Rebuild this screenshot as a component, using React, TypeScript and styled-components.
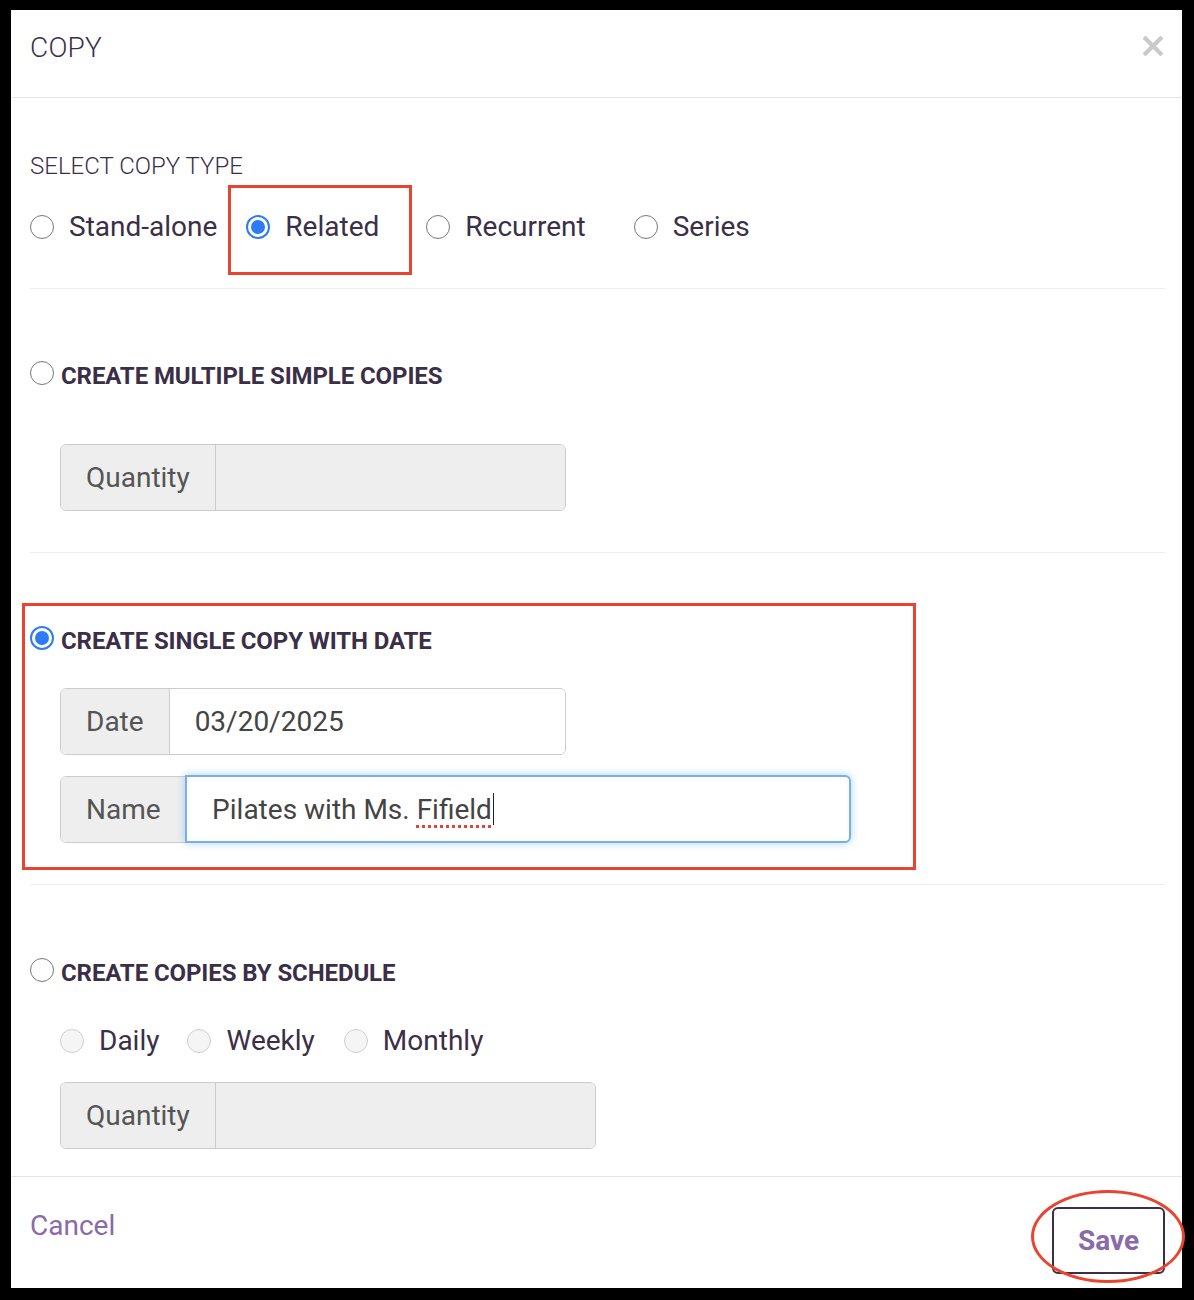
import React from "react";
import styled, { createGlobalStyle } from "styled-components";

const GlobalStyle = createGlobalStyle`
  html, body {
    margin: 0;
    padding: 0;
    background: #000;
  }
  body {
    font-family: Roboto, "Noto Sans", "Liberation Sans", sans-serif;
    color: #3b2f48;
  }
  * {
    box-sizing: border-box;
  }
`;

const red = "#e8442f";
const ink = "#3b2f48";
const purple = "#8a6aa8";

const Frame = styled.div`
  padding: 10px 12px 12px 11px;
  background: #000;
`;

const Modal = styled.div`
  width: 1171px;
  height: 1278px;
  background: #fff;
  display: flex;
  flex-direction: column;
`;

const Header = styled.div`
  height: 89px;
  padding: 0 19px 0 19px;
  border-bottom: 1px solid #e5e5e5;
  display: flex;
  align-items: center;
  justify-content: space-between;
`;

const Title = styled.h4`
  margin: 0 0 12px 0;
  font-size: 28px;
  font-weight: 300;
  letter-spacing: 0.2px;
  color: ${ink};
`;

const CloseButton = styled.button`
  border: 0;
  background: none;
  padding: 0;
  margin: 0 0 14px 0;
  width: 20px;
  height: 20px;
  display: flex;
  cursor: pointer;
`;

const Body = styled.div`
  flex: 1;
  padding: 53px 17px 27px 19px;
  display: flex;
  flex-direction: column;
`;

const Section = styled.div<{ $pad: number; $highlight?: boolean }>`
  position: relative;
  padding-top: ${(p) => p.$pad}px;
  padding-bottom: 41px;
  border-bottom: 1px solid #eee;

  &:last-child {
    border-bottom: 0;
    padding-bottom: 0;
  }

  ${(p) =>
    p.$highlight &&
    `
    &::after {
      content: "";
      position: absolute;
      left: -8px;
      right: 249px;
      top: 50px;
      bottom: 14px;
      border: 3px solid ${red};
      pointer-events: none;
    }
  `}
`;

const TypeLabel = styled.div`
  font-size: 24px;
  font-weight: 300;
  line-height: 30px;
  text-transform: uppercase;
  color: ${ink};
`;

const RadioRow = styled.div<{ $top: number; $indent?: number }>`
  display: flex;
  align-items: center;
  height: 40px;
  margin-top: ${(p) => p.$top}px;
  margin-left: ${(p) => p.$indent ?? 0}px;
`;

const Option = styled.label<{ $after?: number }>`
  position: relative;
  display: flex;
  align-items: center;
  gap: 15px;
  margin-right: ${(p) => p.$after ?? 0}px;
  font-size: 28px;
  line-height: 40px;
  color: ${ink};
  cursor: pointer;
`;

const Marked = styled.span`
  position: relative;
  display: flex;
  align-items: center;
  gap: 15px;

  &::after {
    content: "";
    position: absolute;
    left: -18px;
    right: -33px;
    top: -22px;
    bottom: -28px;
    border: 3px solid ${red};
    pointer-events: none;
  }
`;

const RadioDot = styled.span<{ $checked?: boolean; $disabled?: boolean }>`
  flex: none;
  width: 24px;
  height: 24px;
  border-radius: 50%;
  position: relative;
  background: ${(p) => (p.$disabled ? "#f5f5f5" : "#fff")};
  border: ${(p) =>
    p.$checked
      ? "2px solid #2f7bf5"
      : p.$disabled
      ? "1.5px solid #cfcfcf"
      : "1.5px solid #777"};

  ${(p) =>
    p.$checked &&
    `
    &::after {
      content: "";
      position: absolute;
      inset: 3px;
      border-radius: 50%;
      background: #2f7bf5;
    }
  `}
`;

const Heading = styled.label`
  display: flex;
  align-items: center;
  gap: 7px;
  height: 30px;
  margin-top: 4px;
  font-size: 24px;
  font-weight: 700;
  letter-spacing: -0.1px;
  text-transform: uppercase;
  color: ${ink};
  cursor: pointer;

  ${RadioDot} {
    margin-top: -6px;
  }
`;

const InputGroup = styled.div<{ $width: number; $top: number }>`
  display: flex;
  width: ${(p) => p.$width}px;
  height: 67px;
  margin-top: ${(p) => p.$top}px;
  margin-left: 30px;
  border: 1.5px solid #ccc;
  border-radius: 6px;
  font-size: 28px;
`;

const Addon = styled.span`
  display: flex;
  align-items: center;
  padding: 0 25px 0 25px;
  background: #eee;
  color: #555;
  border-right: 1.5px solid #ccc;
  border-radius: 5px 0 0 5px;
`;

const Field = styled.div<{ $disabled?: boolean; $focus?: boolean }>`
  flex: 1;
  display: flex;
  align-items: center;
  padding-left: 25px;
  color: #444;
  background: ${(p) => (p.$disabled ? "#eee" : "#fff")};
  border-radius: 0 5px 5px 0;

  ${(p) =>
    p.$focus &&
    `
    margin: -1.5px -1.5px -1.5px -1.5px;
    border: 2px solid #7aaee8;
    border-radius: 0 6px 6px 0;
    box-shadow: 0 0 8px rgba(102, 175, 233, 0.55);
  `}
`;

const Misspelled = styled.span`
  text-decoration: underline dotted #e0453a;
  text-decoration-thickness: 3px;
  text-underline-offset: 6px;
`;

const Caret = styled.span`
  display: inline-block;
  width: 1.5px;
  height: 32px;
  background: #222;
  margin-left: 1px;
`;

const Footer = styled.div`
  height: 113px;
  border-top: 1px solid #e5e5e5;
  padding: 30px 17px 0 19px;
  display: flex;
  justify-content: space-between;
  align-items: flex-start;
`;

const CancelLink = styled.a`
  margin-top: 4px;
  font-size: 28px;
  line-height: 30px;
  color: ${purple};
  text-decoration: none;
  cursor: pointer;
`;

const SaveButton = styled.button`
  position: relative;
  width: 113px;
  height: 67px;
  border: 2px solid ${ink};
  border-radius: 6px;
  background: #fff;
  font-family: inherit;
  font-size: 28px;
  font-weight: 700;
  color: ${purple};
  padding: 0;
  cursor: pointer;

  &::after {
    content: "";
    position: absolute;
    left: -23px;
    right: -22px;
    top: -19px;
    bottom: -11px;
    border: 3px solid ${red};
    border-radius: 50%;
    pointer-events: none;
  }
`;

const CloseIcon = () => (
  <svg width="20" height="20" viewBox="0 0 20 20">
    <path d="M2.5 2.5 L17.5 17.5 M17.5 2.5 L2.5 17.5" stroke="#c9c9c9" strokeWidth="4.2" strokeLinecap="square" />
  </svg>
);

export default function App() {
  return (
    <>
      <GlobalStyle />
      <Frame>
        <Modal>
          <Header>
            <Title>COPY</Title>
            <CloseButton aria-label="Close">
              <CloseIcon />
            </CloseButton>
          </Header>

          <Body>
            <Section $pad={0}>
              <TypeLabel>Select copy type</TypeLabel>
              <RadioRow $top={26}>
                <Option $after={29}>
                  <RadioDot />
                  Stand-alone
                </Option>
                <Option $after={47}>
                  <Marked>
                    <RadioDot $checked />
                    Related
                  </Marked>
                </Option>
                <Option $after={48}>
                  <RadioDot />
                  Recurrent
                </Option>
                <Option>
                  <RadioDot />
                  Series
                </Option>
              </RadioRow>
            </Section>

            <Section $pad={68}>
              <Heading>
                <RadioDot />
                Create multiple simple copies
              </Heading>
              <InputGroup $width={506} $top={53}>
                <Addon>Quantity</Addon>
                <Field $disabled />
              </InputGroup>
            </Section>

            <Section $pad={69} $highlight>
              <Heading>
                <RadioDot $checked />
                Create single copy with date
              </Heading>
              <InputGroup $width={506} $top={32}>
                <Addon>Date</Addon>
                <Field>03/20/2025</Field>
              </InputGroup>
              <InputGroup $width={790} $top={21}>
                <Addon>Name</Addon>
                <Field $focus>
                  Pilates with Ms.&nbsp;<Misspelled>Fifield</Misspelled>
                  <Caret />
                </Field>
              </InputGroup>
            </Section>

            <Section $pad={69}>
              <Heading>
                <RadioDot />
                Create copies by schedule
              </Heading>
              <RadioRow $top={33} $indent={30}>
                <Option $after={28}>
                  <RadioDot $disabled />
                  Daily
                </Option>
                <Option $after={29}>
                  <RadioDot $disabled />
                  Weekly
                </Option>
                <Option>
                  <RadioDot $disabled />
                  Monthly
                </Option>
              </RadioRow>
              <InputGroup $width={536} $top={21}>
                <Addon>Quantity</Addon>
                <Field $disabled />
              </InputGroup>
            </Section>
          </Body>

          <Footer>
            <CancelLink>Cancel</CancelLink>
            <SaveButton>Save</SaveButton>
          </Footer>
        </Modal>
      </Frame>
    </>
  );
}
